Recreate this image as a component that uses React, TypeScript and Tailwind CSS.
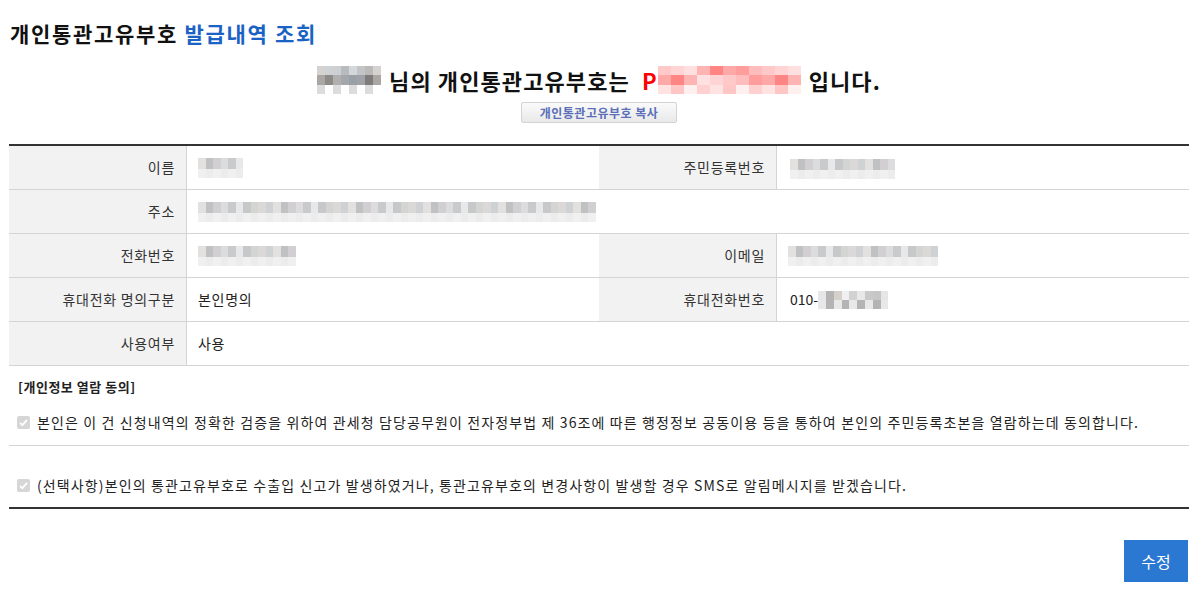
import React from "react";

const FONT = "font-['Malgun_Gothic','Noto_Sans_CJK_KR',sans-serif]";

// pixelated blur blocks standing in for masked personal data
function Mosaic({ cols, rows, cell, colors }: { cols: number; rows: number; cell: [number, number]; colors: string[] }) {
  const cells = [];
  for (let r = 0; r < rows; r++) {
    for (let c = 0; c < cols; c++) {
      cells.push(
        <span
          key={`${r}-${c}`}
          style={{ width: cell[0], height: cell[1], background: colors[(r * 7 + c * 3 + r * c) % colors.length] }}
          className="block"
        />
      );
    }
  }
  return (
    <span className="inline-grid align-middle" style={{ gridTemplateColumns: `repeat(${cols}, ${cell[0]}px)` }}>
      {cells}
    </span>
  );
}

const grey = ["#e2e1df", "#d4d4d3", "#c9cacc", "#c0c1c3", "#dad9d7", "#e6e8ea", "#d1cfd2", "#cfd2d4", "#c6c8ca", "#dcdbdd"];
const greyLight = ["#f0f0f0", "#e8e8e8", "#f3f3f3", "#ececec", "#e4e4e6", "#efefef"];
const pink = ["#ffc9c9", "#ffb4b4", "#ff9d9d", "#ffd4d4", "#ff8585", "#ffbcbc", "#ffe0e0", "#ffa8a8"];

function Blur({ w }: { w: number }) {
  const cols = Math.round(w / 7.5);
  return (
    <span className="inline-flex flex-col align-middle">
      <Mosaic cols={cols} rows={1} cell={[7.5, 11]} colors={grey} />
      <Mosaic cols={cols} rows={1} cell={[7.5, 9]} colors={greyLight} />
    </span>
  );
}

function Label({ children }: { children: React.ReactNode }) {
  return (
    <div className="flex items-center justify-end border-r border-[#d4d4d4] bg-[#f2f2f2] pr-[11px] text-[14px] tracking-[0.05em] text-[#333]">
      {children}
    </div>
  );
}

function Value({ children, span }: { children?: React.ReactNode; span?: boolean }) {
  return (
    <div className={`flex items-center pl-[11px] text-[14px] tracking-[0.05em] text-[#222] ${span ? "col-span-3" : ""}`}>
      {children}
    </div>
  );
}

function Check() {
  return (
    <span className="mr-[7px] inline-flex h-[13px] w-[13px] shrink-0 items-center justify-center rounded-[2px] bg-[#d6d6d6]">
      <svg width="11" height="11" viewBox="0 0 11 11">
        <path d="M2 5.8 L4.4 8.2 L9 2.8" stroke="#fff" strokeWidth="1.8" fill="none" />
      </svg>
    </span>
  );
}

export default function App() {
  return (
    <div className={`${FONT} min-h-[595px] bg-white pl-[9px] pr-[8px] pt-[18px]`}>
      <h1 className="pl-[1px] text-[21px] font-bold leading-[30px] tracking-[0.08em] text-[#111]">
        개인통관고유부호 <span className="text-[#1a62c4]">발급내역 조회</span>
      </h1>

      <div className="mt-[17px] flex items-center justify-center text-[22px] font-bold leading-[30px] tracking-[0.05em] text-[#111]">
        <span className="mr-[8px] inline-flex flex-col">
          <Mosaic cols={8} rows={1} cell={[8, 9]} colors={["#d6d2cf", "#c2c4c8", "#b8bbbe", "#cfd2d5", "#bcbab8", "#d5d8db", "#ccd0d3"]} />
          <Mosaic cols={8} rows={1} cell={[8, 10]} colors={["#a9a6a3", "#9fa3a8", "#a4a8ad", "#8d8a88", "#7f7c7b", "#9aa0a6", "#b2b0ae"]} />
          <Mosaic cols={8} rows={1} cell={[8, 9]} colors={["#dcdcdc", "#f2f5f8", "#e6e6e6", "#ffffff", "#d8d8d8", "#eeeeee"]} />
        </span>
        <span>님의 개인통관고유부호는</span>
        <span className="ml-[12px] flex items-center">
          <span className="text-[#ff0000]">P</span>
          <span className="inline-flex flex-col">
            <Mosaic cols={11} rows={1} cell={[13, 9]} colors={pink} />
            <Mosaic cols={11} rows={1} cell={[13, 10]} colors={[...pink].reverse()} />
            <Mosaic cols={11} rows={1} cell={[13, 9]} colors={["#ffe3e3", "#ffd0d0", "#fff0f0", "#ffc6c6"]} />
          </span>
        </span>
        <span className="ml-[8px]">입니다.</span>
      </div>

      <div className="mt-[7px] flex justify-center">
        <button className="h-[21px] w-[156px] rounded-[2px] border border-[#d3d3d3] bg-gradient-to-b from-[#fafafa] to-[#e9e9e9] text-[12px] font-bold tracking-[0.04em] text-[#5a6fb8]">
          개인통관고유부호 복사
        </button>
      </div>

      <div className="mt-[21px] border-t-2 border-[#333]">
        <div className="grid grid-cols-[178px_1fr_178px_1fr] [&>div]:h-[44px] [&>div]:border-b [&>div]:border-b-[#d4d4d4]">
          <Label>이름</Label>
          <Value>
            <Blur w={45} />
          </Value>
          <Label>주민등록번호</Label>
          <Value>
            <span className="ml-[2px]"><Blur w={105} /></span>
          </Value>

          <Label>주소</Label>
          <Value span>
            <Blur w={395} />
          </Value>

          <Label>전화번호</Label>
          <Value>
            <Blur w={98} />
          </Value>
          <Label>이메일</Label>
          <Value>
            <Blur w={153} />
          </Value>

          <Label>휴대전화 명의구분</Label>
          <Value>본인명의</Value>
          <Label>휴대전화번호</Label>
          <Value>
            <span className="ml-[2px] flex items-center tracking-normal">
              010-
              <Mosaic cols={9} rows={2} cell={[7.8, 9]} colors={["#e6e6e8", "#f0f0f2", "#c9c9c9", "#b4b4b4", "#d2d2d2", "#c6c6c6", "#d6d0cc", "#e8e8e8"]} />
            </span>
          </Value>

          <Label>사용여부</Label>
          <Value span>사용</Value>
        </div>

        <div className="border-b-2 border-[#333] text-[14px] tracking-[0.08em] text-[#222]">
          <div className="pl-[9px] pt-[11px] text-[13px] font-bold leading-[20px] tracking-[0.04em] text-[#222]">[개인정보 열람 동의]</div>
          <div className="flex h-[49px] items-center border-b border-[#d4d4d4] pl-[8px] pt-[3px]">
            <Check />
            본인은 이 건 신청내역의 정확한 검증을 위하여 관세청 담당공무원이 전자정부법 제 36조에 따른 행정정보 공동이용 등을 통하여 본인의 주민등록초본을 열람하는데 동의합니다.
          </div>
          <div className="flex h-[61px] items-center pl-[8px] pt-[17px]">
            <Check />
            (선택사항)본인의 통관고유부호로 수출입 신고가 발생하였거나, 통관고유부호의 변경사항이 발생할 경우 SMS로 알림메시지를 받겠습니다.
          </div>
        </div>
      </div>

      <div className="mt-[31px] flex justify-end pr-[1px]">
        <button className="h-[42px] w-[64px] bg-[#2a78d2] text-[16px] text-white">수정</button>
      </div>
    </div>
  );
}
